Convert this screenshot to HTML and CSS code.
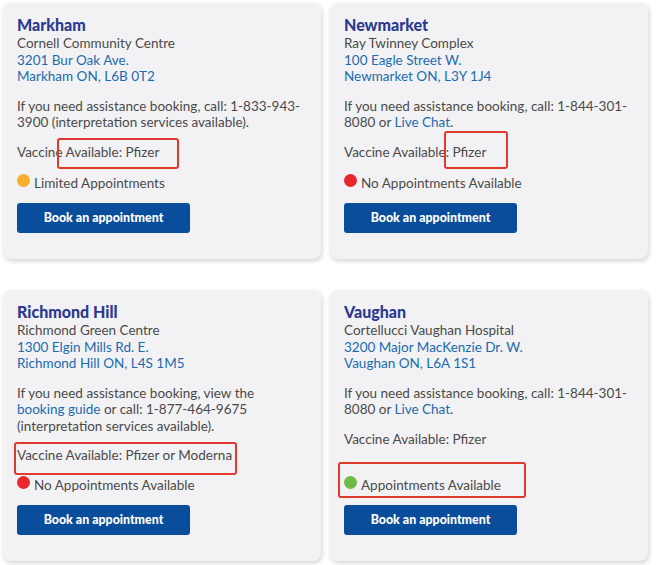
FILE: index.html
```html
<!DOCTYPE html>
<html lang="en">
<head>
<meta charset="utf-8">
<title>Vaccine clinics</title>
<link rel="stylesheet" href="styles.css">
</head>
<body>
<div class="grid">
  <div class="card">
    <h2 class="title">Markham</h2>
    <p class="addr">Cornell Community Centre<br><a class="link" href="#">3201 Bur Oak Ave.<br>Markham ON, L6B 0T2</a></p>
    <p class="para">If you need assistance booking, call: 1-833-943-3900 (interpretation services available).</p>
    <p class="para">Vaccine Available: Pfizer</p>
    <div class="bottom">
      <p class="status"><span class="dot dot-orange"></span>Limited Appointments</p>
      <a class="btn" href="#">Book an appointment</a>
    </div>
    <div class="mark mark-1"></div>
  </div>
  <div class="card">
    <h2 class="title">Newmarket</h2>
    <p class="addr">Ray Twinney Complex<br><a class="link" href="#">100 Eagle Street W.<br>Newmarket ON, L3Y 1J4</a></p>
    <p class="para">If you need assistance booking, call: 1-844-301-8080 or <a class="link" href="#">Live Chat</a>.</p>
    <p class="para">Vaccine Available: Pfizer</p>
    <div class="bottom">
      <p class="status"><span class="dot dot-red"></span>No Appointments Available</p>
      <a class="btn" href="#">Book an appointment</a>
    </div>
    <div class="mark mark-2"></div>
  </div>
  <div class="card">
    <h2 class="title">Richmond Hill</h2>
    <p class="addr">Richmond Green Centre<br><a class="link" href="#">1300 Elgin Mills Rd. E.<br>Richmond Hill ON, L4S 1M5</a></p>
    <p class="para">If you need assistance booking, view the <a class="link" href="#">booking guide</a> or call: 1-877-464-9675 (interpretation services available).</p>
    <p class="para">Vaccine Available: Pfizer or Moderna</p>
    <div class="bottom">
      <p class="status"><span class="dot dot-red"></span>No Appointments Available</p>
      <a class="btn" href="#">Book an appointment</a>
    </div>
    <div class="mark mark-3"></div>
  </div>
  <div class="card">
    <h2 class="title">Vaughan</h2>
    <p class="addr">Cortellucci Vaughan Hospital<br><a class="link" href="#">3200 Major MacKenzie Dr. W.<br>Vaughan ON, L6A 1S1</a></p>
    <p class="para">If you need assistance booking, call: 1-844-301-8080 or <a class="link" href="#">Live Chat</a>.</p>
    <p class="para">Vaccine Available: Pfizer</p>
    <div class="bottom">
      <p class="status"><span class="dot dot-green"></span>Appointments Available</p>
      <a class="btn" href="#">Book an appointment</a>
    </div>
    <div class="mark mark-4"></div>
  </div>
</div>
</body>
</html>
```
FILE: styles.css
```css
* { box-sizing: border-box; }
html, body { margin: 0; padding: 0; background: #ffffff; }
body {
  font-family: Lato, "Liberation Sans", sans-serif;
  font-size: 13.5px;
  line-height: 16.5px;
  color: #4a4a4a;
  overflow: hidden;
  height: 565px;
}
.grid {
  display: grid;
  grid-template-columns: 318px 318px;
  column-gap: 9px;
  row-gap: 31px;
  padding: 3px 0 0 3px;
}
.card {
  position: relative;
  background: #f2f2f4;
  border-radius: 8px;
  box-shadow: 1px 2px 5px rgba(0,0,0,0.18);
  padding: 13px 20px 26px 14px;
  display: flex;
  flex-direction: column;
  min-height: 256px;
}
.title {
  margin: 0;
  font-size: 16px;
  line-height: 18px;
  font-weight: 900;
  color: #2b3990;
}
.addr { margin: 1px 0 0 0; }
.para { margin: 13px 0 0 0; }
.link { color: #1b6bb0; text-decoration: none; }
.bottom { margin-top: auto; padding-top: 13px; }
.status {
  margin: 0;
  display: flex;
  align-items: center;
  gap: 4px;
}
.dot {
  width: 13px;
  height: 13px;
  border-radius: 50%;
  display: inline-block;
  position: relative;
  top: -2px;
}
.dot-orange { background: #f7ae2e; }
.dot-red { background: #e8262b; }
.dot-green { background: #6dbb45; }
.btn {
  display: flex;
  align-items: center;
  justify-content: center;
  margin-top: 12px;
  width: 173px;
  height: 30px;
  background: #0a4d9a;
  color: #ffffff;
  font-weight: 900;
  font-size: 12.4px;
  border-radius: 3px;
  text-decoration: none;
}
.mark {
  position: absolute;
  border: 2px solid #e0392e;
  border-radius: 3px;
}
.mark-1 { left: 54px; top: 135px; width: 122px; height: 31px; }
.mark-2 { left: 114px; top: 128px; width: 64px; height: 38px; }
.mark-3 { left: 11px; top: 152px; width: 223px; height: 33px; }
.mark-4 { left: 8px; top: 172px; width: 188px; height: 36px; }
```
